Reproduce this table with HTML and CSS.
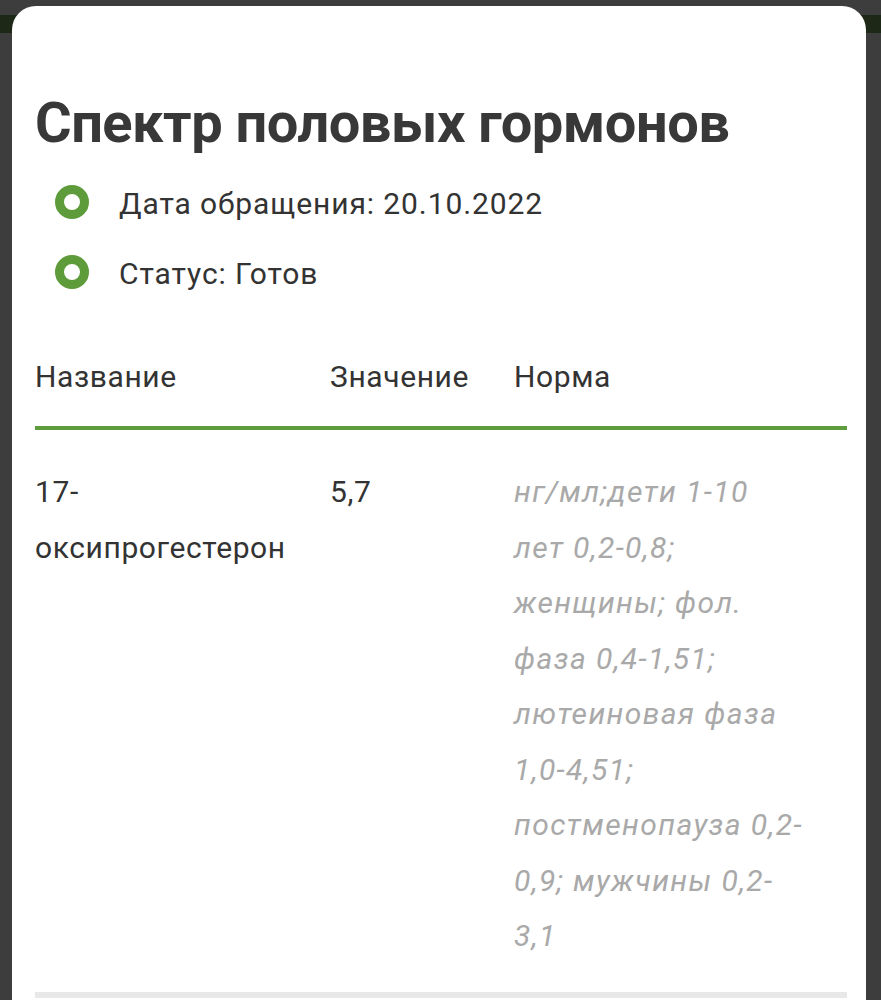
FILE: index.html
```html
<!DOCTYPE html>
<html lang="ru">
<head>
<meta charset="utf-8">
<title>Спектр половых гормонов</title>
<link rel="stylesheet" href="styles.css">
</head>
<body>
<main class="card">
  <h1 class="title">Спектр половых гормонов</h1>
  <ul class="meta">
    <li class="meta-item"><span class="dot"></span><span>Дата обращения: 20.10.2022</span></li>
    <li class="meta-item"><span class="dot"></span><span>Статус: Готов</span></li>
  </ul>
  <div class="table">
    <div class="row head">
      <div class="cell">Название</div>
      <div class="cell">Значение</div>
      <div class="cell">Норма</div>
    </div>
    <div class="row body">
      <div class="cell name">17-оксипрогестерон</div>
      <div class="cell">5,7</div>
      <div class="cell norm">нг/мл;дети 1-10<br>лет 0,2-0,8;<br>женщины; фол.<br>фаза 0,4-1,51;<br>лютеиновая фаза<br>1,0-4,51;<br>постменопауза 0,2-<br>0,9; мужчины 0,2-<br>3,1</div>
    </div>
  </div>
</main>
</body>
</html>
```
FILE: styles.css
```css
html, body {
  margin: 0;
  padding: 0;
}
body {
  background: linear-gradient(#3d3d3d 0 15px, #1d2916 15px 33px, #3d3d3d 33px);
  background-color: #3d3d3d;
  min-height: 1000px;
  font-family: Roboto, "Open Sans", sans-serif;
  color: #333;
}
.card {
  margin: 6px 15px 0 12px;
  background: #fff;
  border-radius: 24px 24px 0 0;
  padding: 83px 19px 0 23px;
  min-height: 1000px;
  box-sizing: border-box;
}
.title {
  margin: 0;
  font-size: 56px;
  line-height: 68px;
  font-weight: 700;
  color: #383838;
  letter-spacing: -0.5px;
}
.meta {
  list-style: none;
  margin: 12px 0 0;
  padding: 0 0 0 20px;
}
.meta-item {
  display: flex;
  align-items: center;
  gap: 30px;
  height: 70px;
  font-size: 30px;
  line-height: 70px;
  letter-spacing: 0.9px;
}
.dot {
  width: 34px;
  height: 34px;
  box-sizing: border-box;
  border: 9px solid #5d9b3b;
  border-radius: 50%;
  flex: none;
  position: relative;
  top: -2px;
}
.table {
  margin-top: 48px;
  font-size: 30px;
  letter-spacing: 0.6px;
}
.row {
  display: grid;
  grid-template-columns: 295px 184px 1fr;
}
.row.head {
  line-height: 40px;
  border-bottom: 4px solid #5e9c3e;
}
.row.head .cell {
  padding-bottom: 29px;
}
.row.body {
  line-height: 55.5px;
  padding: 34px 0 28px;
  border-bottom: 6px solid #e8e8e8;
}
.cell.name {
  padding-right: 32px;
}
.norm {
  font-style: italic;
  color: #a9a9a9;
  letter-spacing: 1.4px;
}
```
